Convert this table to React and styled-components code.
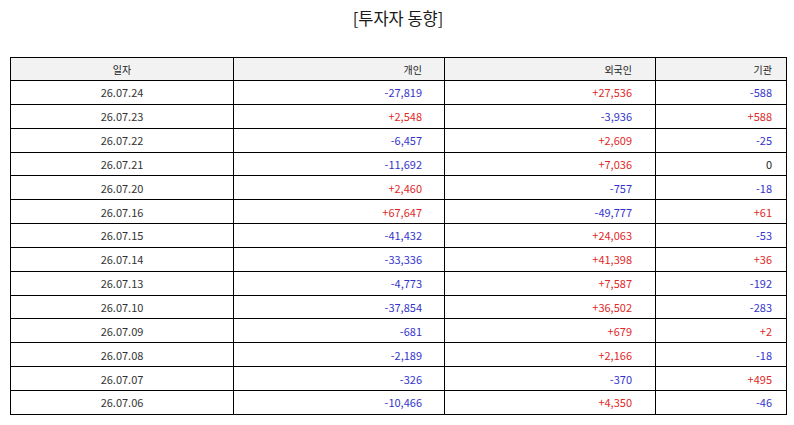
import React from 'react';
import styled, { createGlobalStyle } from 'styled-components';

const GlobalStyle = createGlobalStyle`
  html, body {
    margin: 0;
    padding: 0;
    background: #fff;
  }
  body {
    font-family: "Noto Sans CJK KR", "Noto Sans", sans-serif;
    color: #222;
  }
`;

const Page = styled.div`
  width: 794px;
  height: 425px;
  padding: 0 8px 0 10px;
  box-sizing: border-box;
`;

const Title = styled.h2`
  margin: 8px 0 28px;
  font-size: 16.5px;
  line-height: 21px;
  font-weight: 400;
  text-align: center;
  color: #1a1a1a;
`;

const Table = styled.table`
  width: 776px;
  border-collapse: collapse;
  table-layout: fixed;
  font-size: 11px;
`;

const HeadCell = styled.th`
  height: 22px;
  padding: 0 ${(p) => p.$pad || 0}px 0 0;
  border: 1px solid #000;
  background: #f2f2f2;
  font-weight: 400;
  font-size: 10px;
  color: #222;
  text-align: ${(p) => (p.$right ? 'right' : 'center')};
`;

const Cell = styled.td`
  height: 22.85px;
  padding: 0 ${(p) => p.$pad || 0}px 0 0;
  border: 1px solid #000;
  color: ${(p) => p.$color || '#333'};
  text-align: ${(p) => (p.$right ? 'right' : 'center')};
  white-space: nowrap;
`;

const rows = [
  ['26.07.24', '-27,819', '+27,536', '-588'],
  ['26.07.23', '+2,548', '-3,936', '+588'],
  ['26.07.22', '-6,457', '+2,609', '-25'],
  ['26.07.21', '-11,692', '+7,036', '0'],
  ['26.07.20', '+2,460', '-757', '-18'],
  ['26.07.16', '+67,647', '-49,777', '+61'],
  ['26.07.15', '-41,432', '+24,063', '-53'],
  ['26.07.14', '-33,336', '+41,398', '+36'],
  ['26.07.13', '-4,773', '+7,587', '-192'],
  ['26.07.10', '-37,854', '+36,502', '-283'],
  ['26.07.09', '-681', '+679', '+2'],
  ['26.07.08', '-2,189', '+2,166', '-18'],
  ['26.07.07', '-326', '-370', '+495'],
  ['26.07.06', '-10,466', '+4,350', '-46'],
];

const columns = [
  { label: '일자', width: 223 },
  { label: '개인', width: 211, pad: 22 },
  { label: '외국인', width: 211, pad: 23 },
  { label: '기관', width: 131, pad: 14 },
];

const tone = (v) => {
  if (v.startsWith('+')) return '#e02828';
  if (v.startsWith('-')) return '#3434cc';
  return '#222';
};

export default function App() {
  return (
    <>
      <GlobalStyle />
      <Page>
        <Title>[투자자 동향]</Title>
        <Table>
          <colgroup>
            {columns.map((c) => (
              <col key={c.label} style={{ width: c.width }} />
            ))}
          </colgroup>
          <thead>
            <tr>
              {columns.map((c, i) => (
                <HeadCell key={c.label} $right={i > 0} $pad={c.pad}>
                  {c.label}
                </HeadCell>
              ))}
            </tr>
          </thead>
          <tbody>
            {rows.map((r) => (
              <tr key={r[0]}>
                <Cell>{r[0]}</Cell>
                {r.slice(1).map((v, i) => (
                  <Cell key={i} $right $pad={columns[i + 1].pad} $color={tone(v)}>
                    {v}
                  </Cell>
                ))}
              </tr>
            ))}
          </tbody>
        </Table>
      </Page>
    </>
  );
}
